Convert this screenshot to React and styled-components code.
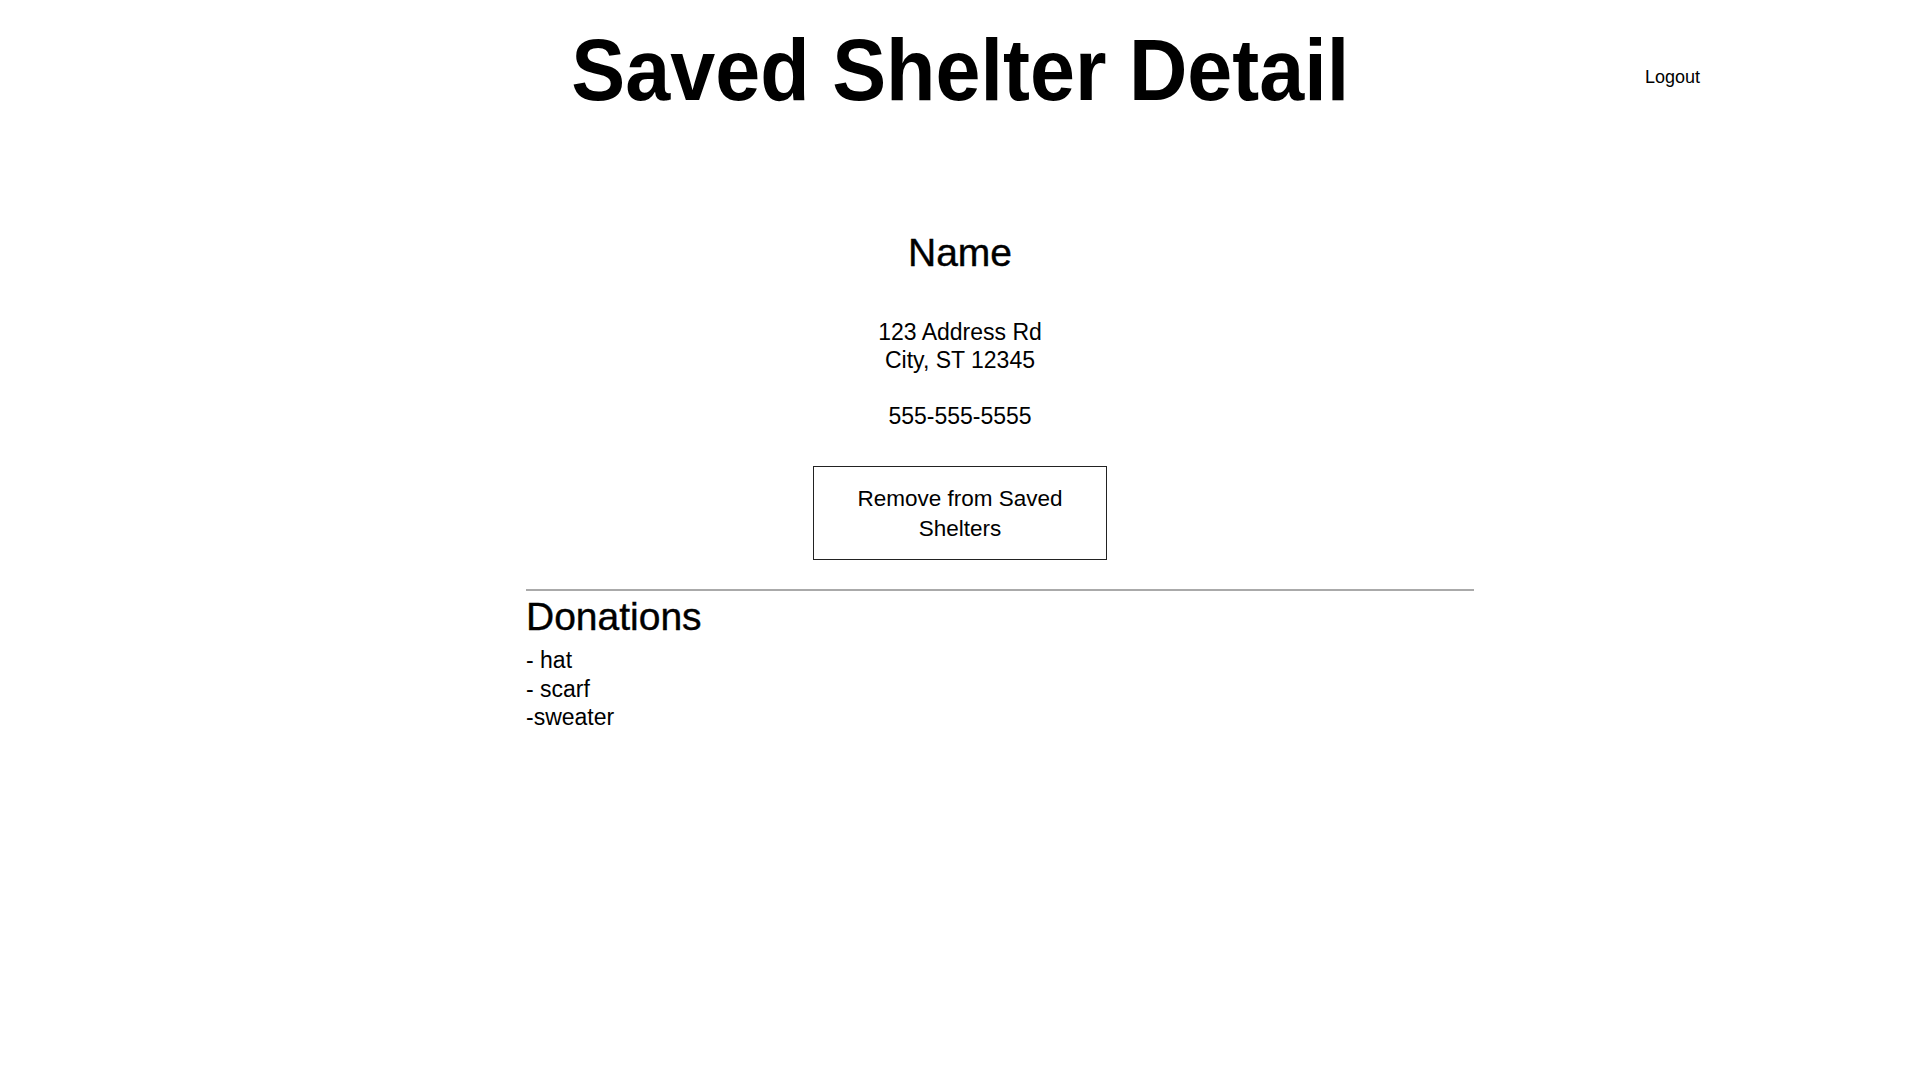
import React from "react"
import styled, { createGlobalStyle } from "styled-components"

const GlobalStyle = createGlobalStyle`
  body {
    margin: 0;
    background: #fff;
    color: #000;
    font-family: "Liberation Sans", Arial, sans-serif;
  }
`

const App = () => {
  return (
    <>
      <GlobalStyle />
      <Page>
        <Header>
          <span />
          <Title>Saved Shelter Detail</Title>
          <Logout>Logout</Logout>
        </Header>

        <Shelter>
          <Name>Name</Name>
          <Info>
            123 Address Rd
            <br />
            City, ST 12345
          </Info>
          <Info spaced>555-555-5555</Info>
          <RemoveButton>
            Remove from Saved
            <br />
            Shelters
          </RemoveButton>
        </Shelter>

        <Donations>
          <Divider />
          <SectionTitle>Donations</SectionTitle>
          <Item>- hat</Item>
          <Item>- scarf</Item>
          <Item>-sweater</Item>
        </Donations>
      </Page>
    </>
  )
}

export default App

const Page = styled.div`
  width: 100%;
  min-height: 1080px;
  display: flex;
  flex-direction: column;
`
const Header = styled.header`
  display: grid;
  grid-template-columns: 1fr auto 1fr;
  align-items: start;
  padding-top: 20px;
`
const Title = styled.h1`
  margin: 0;
  font-size: 87px;
  line-height: 100px;
  font-weight: 700;
  white-space: nowrap;
  transform: scaleX(0.93);
`
const Logout = styled.a`
  justify-self: end;
  margin: 46px 220px 0 0;
  font-size: 18px;
  line-height: 22px;
  cursor: pointer;
`
const Shelter = styled.section`
  display: flex;
  flex-direction: column;
  align-items: center;
  margin-top: 110px;
`
const Name = styled.h2`
  margin: 0 0 42px;
  font-size: 39px;
  line-height: 46px;
  font-weight: 400;
  -webkit-text-stroke: 0.4px #000;
`
const Info = styled.p`
  margin: ${(p) => (p.spaced ? "28px 0 0" : "0")};
  font-size: 23px;
  line-height: 28px;
  text-align: center;
`
const RemoveButton = styled.button`
  margin-top: 36px;
  width: 294px;
  padding: 17px 10px 16px;
  background: #fff;
  border: 1px solid #222;
  font-family: inherit;
  font-size: 22.5px;
  line-height: 29.5px;
  color: #000;
  cursor: pointer;
`
const Donations = styled.section`
  width: 948px;
  margin: 29px 0 0 calc(50% - 434px);
`
const Divider = styled.hr`
  margin: 0;
  border: none;
  height: 2px;
  background: #aaa;
`
const SectionTitle = styled.h3`
  margin: 3px 0 6px;
  font-size: 39px;
  line-height: 46px;
  font-weight: 400;
  -webkit-text-stroke: 0.4px #000;
`
const Item = styled.div`
  font-size: 23px;
  line-height: 28.5px;
`
